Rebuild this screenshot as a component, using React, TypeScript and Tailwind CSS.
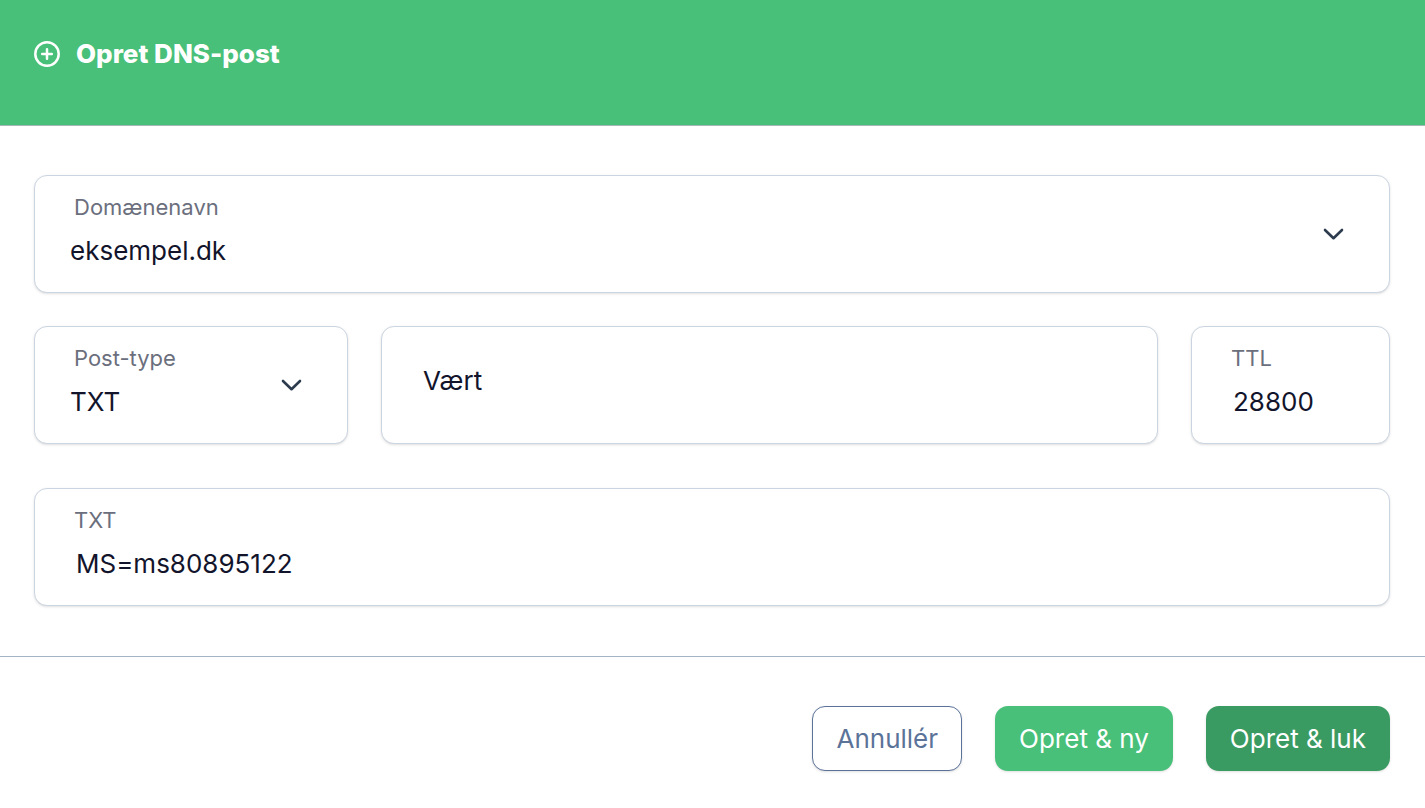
import { useState } from 'react'
import type { ReactNode } from 'react'

const cardClass =
  'flex h-[118px] items-center rounded-[13px] border border-[#cbd5e1] bg-white shadow-sm focus-within:border-[#48c079]'

const valueClass =
  'block h-10 w-full min-w-0 appearance-none bg-transparent text-[26px] leading-10 text-[#12142b] outline-none placeholder:text-[#12142b] placeholder:opacity-100'

const buttonClass = 'h-[65px] rounded-[13px] text-[26px] leading-8 shadow-sm'

function ChevronIcon() {
  return (
    <svg
      viewBox="0 0 24 24"
      className="pointer-events-none mr-11 size-6 shrink-0"
      fill="none"
      stroke="#2d3b4e"
      strokeWidth="2.6"
      strokeLinecap="round"
      strokeLinejoin="round"
      aria-hidden="true"
    >
      <path d="M4 8 12.5 16.2 21 8" />
    </svg>
  )
}

function PlusCircleIcon() {
  return (
    <svg
      viewBox="0 0 26 26"
      className="size-[26px] shrink-0"
      fill="none"
      stroke="currentColor"
      strokeWidth="2.5"
      strokeLinecap="round"
      aria-hidden="true"
    >
      <circle cx="13" cy="13" r="11.7" />
      <path d="M13 8.2v9.6M8.2 13h9.6" />
    </svg>
  )
}

function FieldLabel({ id, children }: { id: string; children: ReactNode }) {
  return (
    <label htmlFor={id} className="block pl-[39px] text-[22px] leading-7 text-[#6b6f7d]">
      {children}
    </label>
  )
}

type SelectFieldProps = {
  id: string
  label: string
  value: string
  options: string[]
  onChange: (value: string) => void
}

function SelectField({ id, label, value, options, onChange }: SelectFieldProps) {
  return (
    <div className={cardClass}>
      <div className="min-w-0 flex-1 pb-1">
        <FieldLabel id={id}>{label}</FieldLabel>
        <div className="pt-2.5 pl-[35px]">
          <select id={id} value={value} onChange={(e) => onChange(e.target.value)} className={valueClass}>
            {options.map((option) => (
              <option key={option}>{option}</option>
            ))}
          </select>
        </div>
      </div>
      <ChevronIcon />
    </div>
  )
}

type TextFieldProps = {
  id: string
  label: string
  value: string
  onChange: (value: string) => void
}

function TextField({ id, label, value, onChange }: TextFieldProps) {
  return (
    <div className={cardClass}>
      <div className="min-w-0 flex-1 pb-1">
        <FieldLabel id={id}>{label}</FieldLabel>
        <div className="pt-2.5 pr-4 pl-[41px]">
          <input id={id} type="text" value={value} onChange={(e) => onChange(e.target.value)} className={valueClass} />
        </div>
      </div>
    </div>
  )
}

export default function App() {
  const [domain, setDomain] = useState('eksempel.dk')
  const [recordType, setRecordType] = useState('TXT')
  const [host, setHost] = useState('')
  const [ttl, setTtl] = useState('28800')
  const [txt, setTxt] = useState('MS=ms80895122')

  return (
    <form
      onSubmit={(e) => e.preventDefault()}
      className="min-h-screen bg-white font-['Inter','Liberation_Sans',sans-serif]"
    >
      {/* Header */}
      <header className="flex items-center gap-4 border-b border-[#a3b8b5] bg-[#48c079] px-[34px] pt-9 pb-[53px] text-white">
        <PlusCircleIcon />
        <h1 className="text-[26px] leading-9 font-extrabold">Opret DNS-post</h1>
      </header>

      {/* Fields */}
      <div className="pt-[49px] pr-[35px] pb-[50px] pl-[34px]">
        <SelectField
          id="domain"
          label="Domænenavn"
          value={domain}
          options={['eksempel.dk']}
          onChange={setDomain}
        />
        <div className="mt-[33px] grid grid-cols-[314px_1fr_199px] gap-[33px]">
          <SelectField
            id="record-type"
            label="Post-type"
            value={recordType}
            options={['A', 'AAAA', 'CNAME', 'MX', 'TXT']}
            onChange={setRecordType}
          />
          <div className={cardClass}>
            <div className="min-w-0 flex-1 px-[41px] pb-2">
              <input
                type="text"
                aria-label="Vært"
                placeholder="Vært"
                value={host}
                onChange={(e) => setHost(e.target.value)}
                className={valueClass}
              />
            </div>
          </div>
          <TextField id="ttl" label="TTL" value={ttl} onChange={setTtl} />
        </div>
        <div className="mt-11">
          <TextField id="txt" label="TXT" value={txt} onChange={setTxt} />
        </div>
      </div>

      {/* Actions */}
      <footer className="flex justify-end gap-[33px] border-t border-[#a5b4c5] px-[35px] pt-[49px] pb-9">
        <button type="button" className={`${buttonClass} border border-[#5b7399] bg-white px-[23px] text-[#5b7399]`}>
          Annullér
        </button>
        <button type="submit" className={`${buttonClass} bg-[#48c079] px-6 text-white`}>
          Opret &amp; ny
        </button>
        <button type="submit" className={`${buttonClass} bg-[#3a9b62] px-6 text-white`}>
          Opret &amp; luk
        </button>
      </footer>
    </form>
  )
}
